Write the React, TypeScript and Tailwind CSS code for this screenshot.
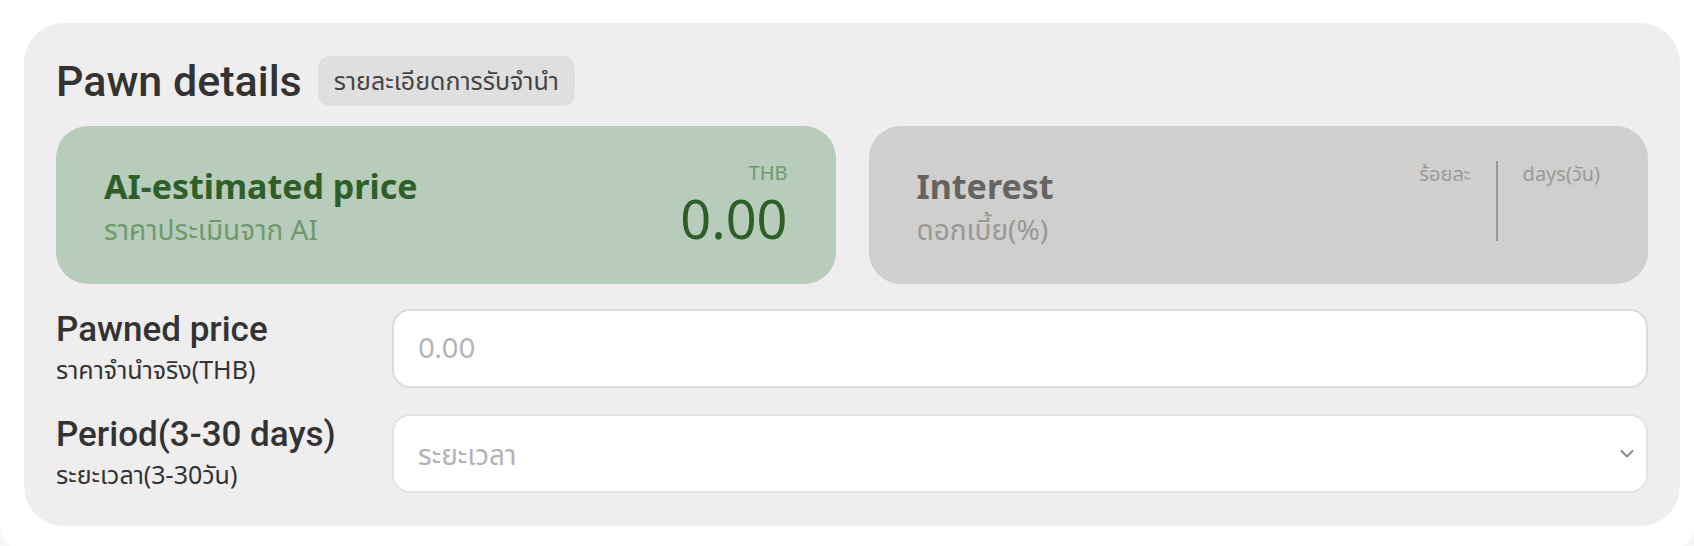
import React from 'react';

const thai = '"Noto Sans", "Noto Sans Thai", "Noto Sans Thai UI", sans-serif';

export default function App() {
  return (
    <div className="min-h-screen bg-[#f7f7f7]" style={{ fontFamily: 'Roboto, "Noto Sans", sans-serif' }}>
      <div className="bg-white rounded-b-[24px] pt-[23px] pb-[24px] pl-[24px] pr-[14px]">
        <div className="bg-[#efedee] rounded-[40px] px-[32px] pt-[32px] pb-[33px]">
          {/* header */}
          <div className="flex items-center gap-[16px] h-[52px]">
            <h1 className="text-[43px] font-medium text-[#333333] leading-none">Pawn details</h1>
            <span className="bg-[#e0dfdf] rounded-[12px] px-[16px] h-[50px] flex items-center text-[25px] text-[#444444]" style={{ fontFamily: thai }}>
              รายละเอียดการรับจำนำ
            </span>
          </div>

          {/* cards */}
          <div className="grid grid-cols-2 gap-[33px] mt-[19px]" style={{ fontFamily: thai }}>
            <div className="bg-[#b8ccbb] rounded-[32px] h-[158px] px-[48px] flex items-center justify-between">
              <div className="flex flex-col mt-[6px]">
                <span className="text-[34px] font-bold text-[#2f5f28] leading-[42px]">AI-estimated price</span>
                <span className="text-[28px] text-[#6e9a6b] leading-[44px]">ราคาประเมินจาก AI</span>
              </div>
              <div className="flex flex-col items-end">
                <span className="text-[20px] text-[#6e9a6b] leading-[20px]">THB</span>
                <span className="text-[54px] text-[#2f5f28] leading-[74px] -mt-[2px] -mb-[7px]">0.00</span>
              </div>
            </div>
            <div className="bg-[#d0cfcd] rounded-[32px] h-[158px] pl-[48px] pr-[48px] flex items-center justify-between">
              <div className="flex flex-col mt-[6px]">
                <span className="text-[34px] font-bold text-[#666462] leading-[42px]">Interest</span>
                <span className="text-[28px] text-[#999896] leading-[44px]">ดอกเบี้ย(%)</span>
              </div>
              <div className="flex items-start self-start mt-[35px]">
                <span className="text-[20px] text-[#9a9997] pr-[25px] leading-[26px]">ร้อยละ</span>
                <div className="w-[2px] h-[80px] bg-[#999896]"></div>
                <span className="text-[20px] text-[#9a9997] pl-[25px] leading-[26px]">days(วัน)</span>
              </div>
            </div>
          </div>

          {/* form rows */}
          <div className="flex flex-col gap-[26px] mt-[25px]">
            <div className="flex items-center">
              <div className="w-[336px] shrink-0 flex flex-col">
                <span className="text-[35px] font-medium text-[#333333] leading-[42px]">Pawned price</span>
                <span className="text-[25px] text-[#333333] leading-[37px]" style={{ fontFamily: thai }}>ราคาจำนำจริง(THB)</span>
              </div>
              <input
                placeholder="0.00"
                className="flex-1 h-[79px] bg-white border-2 border-[#dcdcdc] rounded-[18px] px-[24px] text-[27px] text-[#333] placeholder:text-[#b3b3b3] outline-none"
                style={{ fontFamily: 'Inter, sans-serif' }}
              />
            </div>
            <div className="flex items-center">
              <div className="w-[336px] shrink-0 flex flex-col">
                <span className="text-[35px] font-medium text-[#333333] leading-[42px]">Period(3-30 days)</span>
                <span className="text-[25px] text-[#333333] leading-[37px]" style={{ fontFamily: thai }}>ระยะเวลา(3-30วัน)</span>
              </div>
              <div className="flex-1 relative">
                <select
                  defaultValue=""
                  className="w-full h-[79px] appearance-none bg-white border-2 border-[#e4e4e4] rounded-[18px] px-[24px] text-[28px] text-[#b3b3b3] outline-none"
                  style={{ fontFamily: thai }}
                >
                  <option value="" disabled>ระยะเวลา</option>
                </select>
                <svg className="absolute right-[14px] top-1/2 -translate-y-1/2 pointer-events-none" width="14" height="9" viewBox="0 0 14 9" fill="none">
                  <path d="M1.5 1.5L7 7L12.5 1.5" stroke="#888" strokeWidth="2" strokeLinecap="round" strokeLinejoin="round" />
                </svg>
              </div>
            </div>
          </div>
        </div>
      </div>
    </div>
  );
}
